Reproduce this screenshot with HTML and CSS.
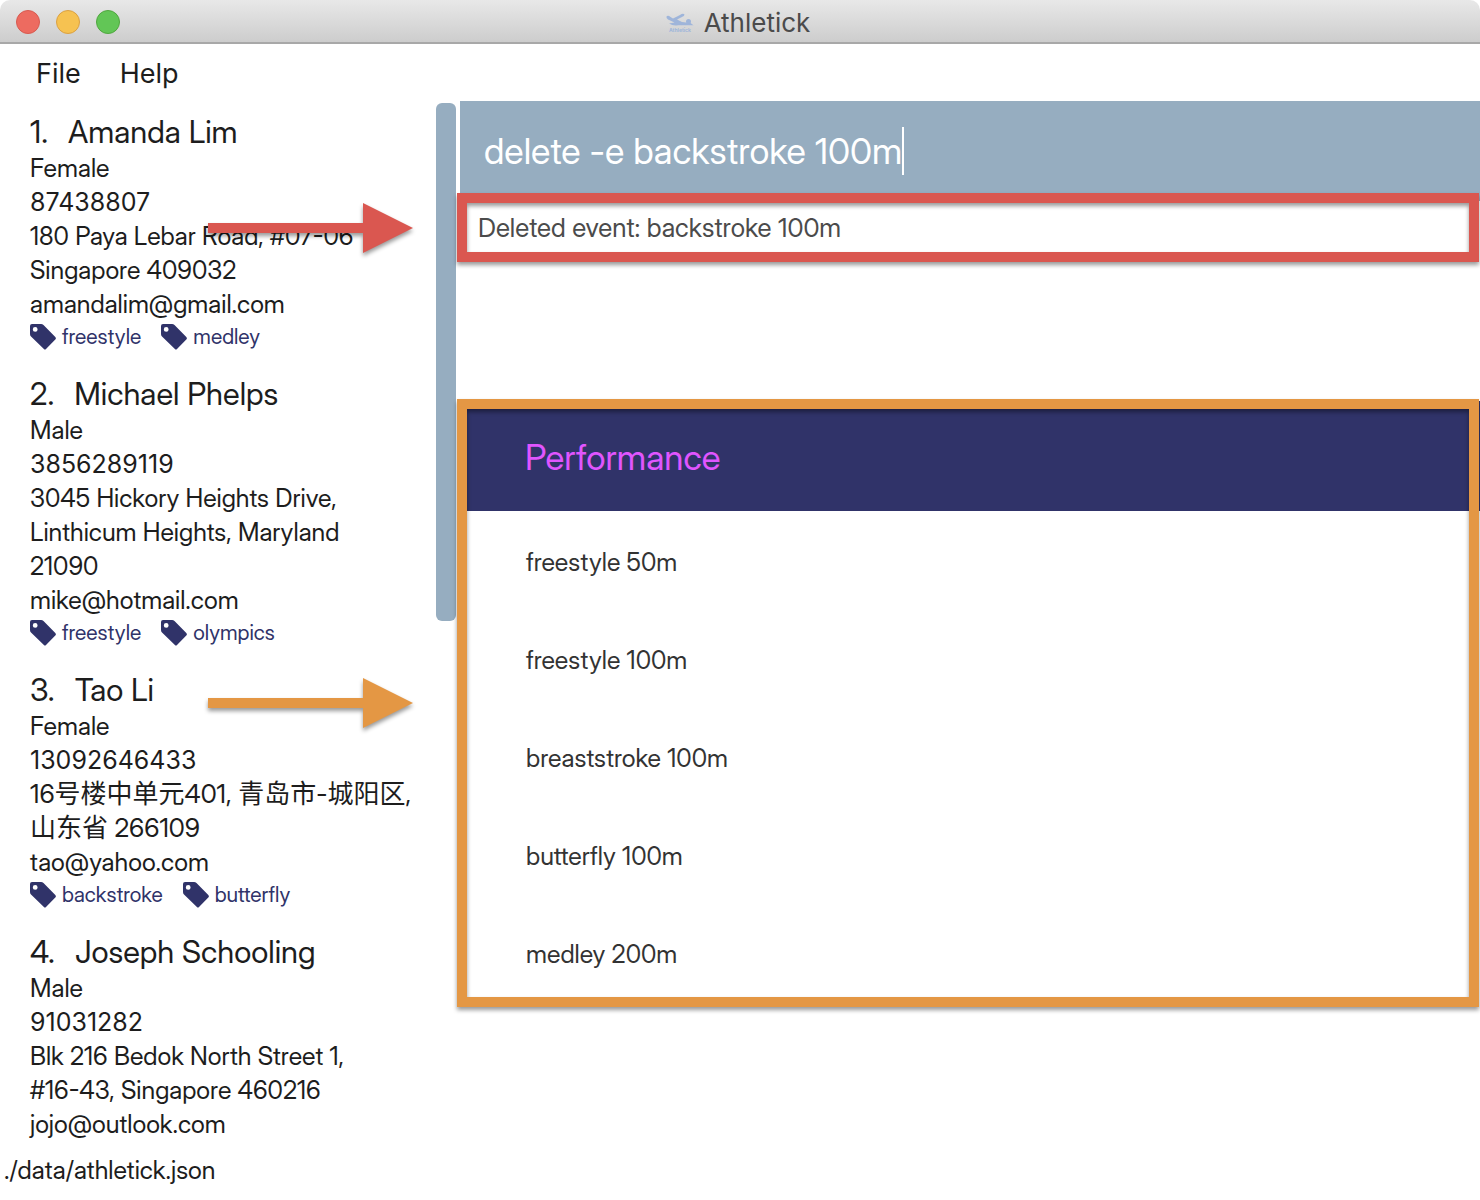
FILE: index.html
```html
<!DOCTYPE html>
<html lang="en">
<head>
<meta charset="utf-8">
<title>Athletick</title>
<link rel="stylesheet" href="styles.css">
</head>
<body>
<svg class="defs" aria-hidden="true">
  <symbol id="tag" viewBox="0 0 26 26"><path fill-rule="evenodd" d="M2 0H11Q12.500 0 13.500 1L25.300 13Q26.500 14.300 25.300 15.600L16 25Q15 26 13.900 25L1 12.500Q0 11.500 0 10V2Q0 0 2 0ZM5.200 3A2.400 2.400 0 1 0 5.200 7.800A2.400 2.400 0 1 0 5.200 3Z"/></symbol>
</svg>
<div class="window">
  <header class="titlebar">
    <div class="controls">
      <button class="control close" aria-label="Close"></button>
      <button class="control minimise" aria-label="Minimise"></button>
      <button class="control zoom" aria-label="Zoom"></button>
    </div>
    <h1 class="title">
      <svg class="logo" width="28" height="20" viewBox="0 0 28 20" aria-hidden="true">
        <path d="M.5 3.500Q2 2 4.500 4L7 5.500L14 2Q17 0 18.500 1.500Q18.500 3 16 4L11 6.500L16 9L20 9.500L24.500 10L27.500 12.200H12Q7 13 3 10.500L8.500 9.500L2 6.500Q0 5 .5 3.500Z"/>
        <circle cx="22.500" cy="8.500" r="2.500"/>
        <text x="3" y="18.500">Athletick</text>
      </svg>
      Athletick
    </h1>
  </header>
  <nav class="menu">
    <button class="menu-item">File</button>
    <button class="menu-item">Help</button>
  </nav>
  <div class="content">
    <aside class="sidebar">
      <ol class="athletes">
        <li class="athlete">
          <h2 class="name"><span>1.</span><span>Amanda Lim</span></h2>
          <p>Female</p>
          <p class="phone">87438807</p>
          <p>180 Paya Lebar Road, #07-06<br>Singapore 409032</p>
          <p>amandalim@gmail.com</p>
          <div class="tags"><span class="tag"><svg class="tag-icon"><use href="#tag"/></svg>freestyle</span><span class="tag"><svg class="tag-icon"><use href="#tag"/></svg>medley</span></div>
        </li>
        <li class="athlete">
          <h2 class="name"><span>2.</span><span>Michael Phelps</span></h2>
          <p>Male</p>
          <p class="phone">3856289119</p>
          <p>3045 Hickory Heights Drive,<br>Linthicum Heights, Maryland<br>21090</p>
          <p>mike@hotmail.com</p>
          <div class="tags"><span class="tag"><svg class="tag-icon"><use href="#tag"/></svg>freestyle</span><span class="tag"><svg class="tag-icon"><use href="#tag"/></svg>olympics</span></div>
        </li>
        <li class="athlete">
          <h2 class="name"><span>3.</span><span>Tao Li</span></h2>
          <p>Female</p>
          <p class="phone">13092646433</p>
          <p class="address-zh" lang="zh-Hans">16号楼中单元401, 青岛市-城阳区,<br>山东省 266109</p>
          <p>tao@yahoo.com</p>
          <div class="tags"><span class="tag"><svg class="tag-icon"><use href="#tag"/></svg>backstroke</span><span class="tag"><svg class="tag-icon"><use href="#tag"/></svg>butterfly</span></div>
        </li>
        <li class="athlete">
          <h2 class="name"><span>4.</span><span>Joseph Schooling</span></h2>
          <p>Male</p>
          <p class="phone">91031282</p>
          <p>Blk 216 Bedok North Street 1,<br>#16-43, Singapore 460216</p>
          <p>jojo@outlook.com</p>
        </li>
      </ol>
      <div class="scrollbar"></div>
    </aside>
    <main class="main">
      <div class="command">
        <input class="command-input" type="text" aria-label="Command" value="delete -e backstroke 100m">
        <span class="caret"></span>
      </div>
      <div class="result framed red">Deleted event: backstroke 100m</div>
      <section class="performance framed orange">
        <h2 class="heading">Performance</h2>
        <ul class="events">
          <li>freestyle 50m</li>
          <li>freestyle 100m</li>
          <li>breaststroke 100m</li>
          <li>butterfly 100m</li>
          <li>medley 200m</li>
        </ul>
      </section>
    </main>
  </div>
  <footer class="status">./data/athletick.json</footer>
  <svg class="arrow arrow-result" viewBox="0 0 206 50" aria-hidden="true"><path d="M0 20H155V0L205 25L155 50V30H0Z"/></svg>
  <svg class="arrow arrow-events" viewBox="0 0 206 50" aria-hidden="true"><path d="M0 20H155V0L205 25L155 50V30H0Z"/></svg>
</div>
</body>
</html>
```
FILE: styles.css
```css
:root {
  --steel: #96adc0;
  --navy: #303369;
  --red: #da5750;
  --orange: #e49744;
}

* { box-sizing: border-box; }

body {
  margin: 0;
  background: #fff;
  color: #1d1d1d;
  font: 25px/34px "Inter Display", Inter, "Noto Sans CJK SC", sans-serif;
}

h1, h2, p, ol, ul {
  margin: 0;
  padding: 0;
  font-weight: 400;
  list-style: none;
}

button {
  padding: 0;
  border: 0;
  background: none;
  color: inherit;
  font: inherit;
}

.defs { position: absolute; width: 0; height: 0; }

.window {
  position: relative;
  display: flex;
  flex-direction: column;
  min-height: 100vh;
}

.titlebar {
  display: grid;
  grid-template-columns: 1fr auto 1fr;
  align-items: center;
  height: 44px;
  padding: 0 16px;
  border-bottom: 2px solid #a8a8a8;
  border-radius: 10px 10px 0 0;
  background: linear-gradient(#e8e8e8, #cdcdcd);
}

.controls { display: flex; gap: 16px; padding-top: 2px; }

.control {
  width: 24px;
  height: 24px;
  border: 1px solid #d85a50;
  border-radius: 50%;
  background: #ed6b60;
}

.minimise { border-color: #dba142; background: #f6c251; }
.zoom { border-color: #50a73f; background: #62c656; }

.title {
  display: flex;
  align-items: center;
  gap: 10px;
  padding: 4px 4px 0 0;
  color: #4b4b4b;
  font-family: Inter, sans-serif;
  font-size: 26px;
}

.logo { fill: #9fb5da; }
.logo text { font-size: 5px; font-weight: 700; }

.menu {
  display: flex;
  gap: 39px;
  height: 57px;
  padding: 13px 36px 10px;
  font-family: Inter, sans-serif;
  font-size: 27px;
}

.content {
  display: grid;
  grid-template-columns: 460px 1fr;
  flex: 1;
}

.sidebar {
  display: flex;
  justify-content: space-between;
  padding-right: 4px;
}

.athletes { padding: 12px 0 0 30px; white-space: nowrap; }
.athlete { padding-bottom: 22px; }
.athlete:last-child { padding-bottom: 0; }

.name {
  display: flex;
  gap: 20px;
  font-size: 31px;
  line-height: 38px;
}

.phone { font-family: Inter, sans-serif; }
.address-zh { font-size: 26px; }

.tags {
  display: flex;
  align-items: center;
  gap: 20px;
  height: 32px;
  color: var(--navy);
  font-size: 21px;
}

.tag { display: flex; align-items: center; gap: 6px; }
.tag-icon { width: 26px; height: 26px; fill: var(--navy); }

.scrollbar {
  flex: none;
  width: 20px;
  height: 518px;
  margin-top: 2px;
  border-radius: 6px;
  background: var(--steel);
}

.command {
  display: flex;
  align-items: center;
  height: 100px;
  padding-left: 24px;
  background: var(--steel);
}

.command-input {
  field-sizing: content;
  padding: 0;
  border: 0;
  outline: 0;
  background: none;
  color: #fff;
  font: 36px/48px "Inter Display", Inter, sans-serif;
}

.caret { width: 2px; height: 48px; background: #fff; }

/* Callout frames sit over the panels they point out. */
.framed { position: relative; }

.framed::after {
  content: "";
  position: absolute;
  inset: -8px 1px -10px -3px;
  border: 10px solid var(--red);
  filter: drop-shadow(0 3px 2px rgb(0 0 0 / 40%));
}

.framed.orange::after { inset: -2px 1px -10px -3px; border-color: var(--orange); }

.result {
  height: 51px;
  padding: 10px 18px;
  color: #4b4b4b;
  font-size: 26px;
}

.performance { margin-top: 149px; color: #333; }

.heading {
  height: 110px;
  padding: 32px 65px;
  background: var(--navy);
  color: #e055ff;
  font-size: 35px;
  line-height: 48px;
}

.events { padding: 2px 66px 0; }
.events li { padding: 32px 0; }
.events li:last-child { padding-bottom: 26px; }

.status { height: 52px; padding: 5px 4px; }

.arrow {
  position: absolute;
  left: 208px;
  width: 206px;
  height: 50px;
  overflow: visible;
  filter: drop-shadow(0 3px 2px rgb(0 0 0 / 40%));
}

.arrow-result { top: 203px; fill: var(--red); }
.arrow-events { top: 678px; fill: var(--orange); }
```
